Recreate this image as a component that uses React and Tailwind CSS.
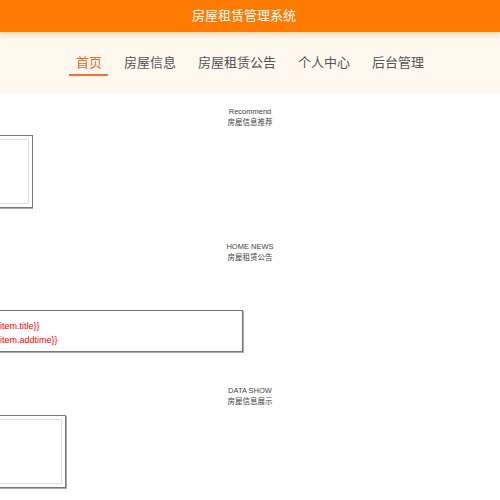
export default function App() {
  const font = { fontFamily: '"Liberation Sans", "Noto Sans CJK SC", sans-serif' };
  const nav = ["首页", "房屋信息", "房屋租赁公告", "个人中心", "后台管理"];
  const Title = ({ en, zh, mt }) => (
    <div className={`${mt} flex flex-col items-center text-[7.5px] leading-[11px] text-[#444]`}>
      <div>{en}</div>
      <div>{zh}</div>
    </div>
  );
  return (
    <div className="w-[500px] h-[500px] overflow-hidden bg-white" style={font}>
      <div className="h-[32px] bg-[#ff7a00] flex items-center justify-center pr-[12px] text-white text-[13px] relative z-10 shadow-[0_2px_6px_rgba(230,120,40,0.35)]">
        房屋租赁管理系统
      </div>
      <div className="h-[61px] bg-[#fff8ef] flex justify-center gap-[9px] pt-[22px]">
        {nav.map((n, i) => (
          <div
            key={n}
            className={`h-[22px] px-[6.5px] text-[13px] leading-[18px] ${
              i === 0 ? "text-[#ea6a2c] border-b-2 border-[#f07534]" : "text-[#555]"
            }`}
          >
            {n}
          </div>
        ))}
      </div>
      <Title en="Recommend" zh="房屋信息推荐" mt="mt-[13px]" />
      <div className="mt-[7px] ml-[-67px] w-[100px] h-[73px] border border-[#777] shadow-[0_1px_0_#aaa] p-[3px]">
        <div className="w-full h-full border border-[#ddd]"></div>
      </div>
      <Title en="HOME NEWS" zh="房屋租赁公告" mt="mt-[33px]" />
      <div className="mt-[47px] ml-[-57px] w-[300px] h-[42px] border border-[#777] shadow-[1px_1px_0_#aaa] pt-[8px] pl-[50px] text-[9px] leading-[14px] text-[#ff0000]">
        <div>{"{{item.title}}"}</div>
        <div>{"{{item.addtime}}"}</div>
      </div>
      <Title en="DATA SHOW" zh="房屋信息展示" mt="mt-[33px]" />
      <div className="mt-[8px] ml-[-34px] w-[100px] h-[73px] border border-[#777] shadow-[1px_1px_0_#aaa] p-[3px]">
        <div className="w-full h-full border border-[#ddd]"></div>
      </div>
    </div>
  );
}
